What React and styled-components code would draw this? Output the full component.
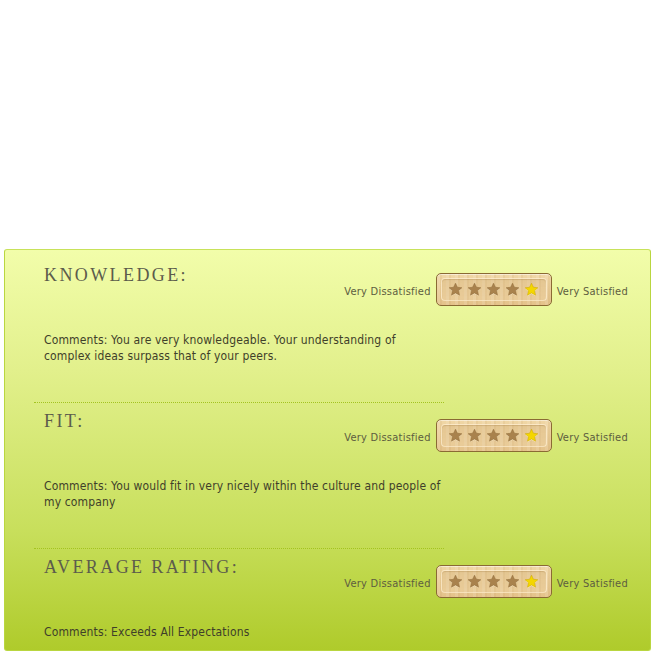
import React from "react";
import styled, { createGlobalStyle } from "styled-components";

const Global = createGlobalStyle`
  html, body { margin: 0; padding: 0; background: #ffffff; }
  body { font-family: "DejaVu Sans Condensed", "DejaVu Sans", sans-serif; }
`;

const Page = styled.div`
  padding: 249px 4px 0 4px;
`;

const Panel = styled.div`
  border: 1px solid #b9d640;
  border-top-color: #c8e25a;
  border-radius: 3px;
  background: linear-gradient(to bottom, #f2fdaa 0%, #e2f08c 30%, #c8df5c 70%, #afcb2b 100%);
  padding: 7px 22px 7px 29px;
`;

const Section = styled.section`
  padding: ${(p) => (p.$last ? "7px 0 3px" : "7px 0 38px")};
`;

const Divider = styled.div`
  width: 410px;
  height: 0;
  border-top: 1px dotted #a4c420;
`;

const Head = styled.div`
  display: flex;
  justify-content: space-between;
  align-items: flex-start;
  padding-left: 10px;
`;

const Title = styled.h2`
  margin: 0;
  font-family: "Liberation Serif", "Times New Roman", serif;
  font-weight: normal;
  font-size: 18px;
  line-height: 22px;
  letter-spacing: 2.4px;
  color: #5c5c4c;
`;

const RatingGroup = styled.div`
  display: flex;
  align-items: center;
  gap: 5px;
  margin-top: 9px;
`;

const Label = styled.span`
  font-size: 11px;
  letter-spacing: 0.25px;
  color: #5d5d40;
  padding-top: 3px;
`;

const StarBox = styled.div`
  width: 114px;
  height: 31px;
  border: 1px solid #8a6a34;
  border-radius: 5px;
  box-sizing: content-box;
  background:
    repeating-linear-gradient(90deg, rgba(255,255,255,0.10) 0 3px, rgba(160,110,50,0.07) 3px 5px, rgba(255,255,255,0) 5px 9px),
    linear-gradient(to bottom, #f0d7a6, #e4c28a);
  display: flex;
  align-items: center;
  justify-content: center;
  box-shadow: inset 0 1px 0 rgba(255,255,255,0.5);
`;

const StarTrack = styled.div`
  width: 104px;
  height: 21px;
  border-radius: 4px;
  border: 1px solid rgba(255, 240, 210, 0.7);
  background: linear-gradient(to bottom, rgba(200,160,100,0.25), rgba(255,240,210,0.15));
  box-shadow: inset 0 1px 1px rgba(140,100,40,0.25);
  display: flex;
  align-items: center;
  justify-content: center;
  gap: 4px;
`;

const Comments = styled.p`
  margin: 26px 0 0 0;
  padding-left: 10px;
  width: 400px;
  font-size: 12px;
  letter-spacing: 0.15px;
  line-height: 16px;
  color: #3f3f2a;
`;

const Star = ({ on }) => (
  <svg width="15" height="15" viewBox="0 0 24 24" aria-hidden="true">
    <path
      d="M12 1.8l3.1 6.6 7.1.8-5.3 4.8 1.5 7.1L12 17.5l-6.4 3.6 1.5-7.1L1.8 9.2l7.1-.8z"
      fill={on ? "#fff2c0" : "#f7e6c2"}
      transform="translate(0 1.2)"
    />
    <path
      d="M12 1.8l3.1 6.6 7.1.8-5.3 4.8 1.5 7.1L12 17.5l-6.4 3.6 1.5-7.1L1.8 9.2l7.1-.8z"
      fill={on ? "#f4d600" : "#a9824d"}
      stroke={on ? "#c9a300" : "#8f6a38"}
      strokeWidth="0.8"
      strokeLinejoin="round"
    />
  </svg>
);

const Rating = ({ value }) => (
  <RatingGroup>
    <Label>Very Dissatisfied</Label>
    <StarBox>
      <StarTrack>
        {[1, 2, 3, 4, 5].map((i) => (
          <Star key={i} on={i === value} />
        ))}
      </StarTrack>
    </StarBox>
    <Label>Very Satisfied</Label>
  </RatingGroup>
);

const items = [
  {
    title: "KNOWLEDGE:",
    comment:
      "Comments: You are very knowledgeable. Your understanding of complex ideas surpass that of your peers.",
  },
  {
    title: "FIT:",
    comment:
      "Comments: You would fit in very nicely within the culture and people of my company",
  },
  { title: "AVERAGE RATING:", comment: "Comments: Exceeds All Expectations" },
];

export default function App() {
  return (
    <Page>
      <Global />
      <Panel>
        {items.map((it, i) => (
          <React.Fragment key={it.title}>
            {i > 0 && <Divider />}
            <Section $last={i === items.length - 1}>
              <Head>
                <Title>{it.title}</Title>
                <Rating value={5} />
              </Head>
              <Comments>{it.comment}</Comments>
            </Section>
          </React.Fragment>
        ))}
      </Panel>
    </Page>
  );
}
